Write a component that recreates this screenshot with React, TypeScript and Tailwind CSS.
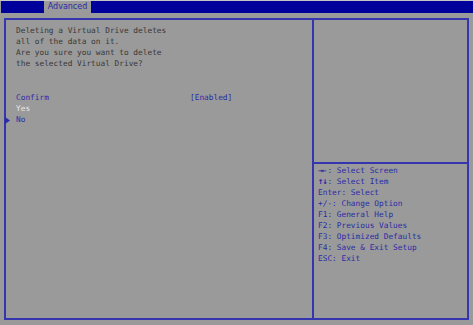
import React from 'react'

const helpLines = [
    'Enter: Select',
    '+/-: Change Option',
    'F1: General Help',
    'F2: Previous Values',
    'F3: Optimized Defaults',
    'F4: Save & Exit Setup',
    'ESC: Exit',
]

const App: React.FC = () => {
    return (
        <div className="relative w-[473px] h-[325px] bg-[#9a9a9a] border-t border-[#c4c4c4] font-['DejaVu_Sans_Mono',monospace] text-[7.8px] leading-[11px] overflow-hidden">
            {/* Top menu bar */}
            <div className="ml-px h-[12px] bg-[#00009a] flex">
                <div className="ml-[43px] w-[47px] h-[12px] bg-[#9a9a9a] text-[#2b2ba6] text-[8px] leading-[12px] text-center font-['DejaVu_Sans',sans-serif]">
                    Advanced
                </div>
            </div>

            {/* Main frame */}
            <div className="mt-[5px] ml-[4px] w-[465px] h-[302px] border-2 border-[#3535b0] flex">
                {/* Left panel */}
                <div className="relative w-[308px] border-r-2 border-[#3535b0] pl-[10px] pt-[5px]">
                    <div className="text-[#383838]">
                        <div>Deleting a Virtual Drive deletes</div>
                        <div>all of the data on it.</div>
                        <div>Are you sure you want to delete</div>
                        <div>the selected Virtual Drive?</div>
                    </div>
                    <div className="mt-[23px] flex text-[#2b2ba6]">
                        <div className="w-[174px]">Confirm</div>
                        <div>[Enabled]</div>
                    </div>
                    <div className="text-[#e8e8e8]">Yes</div>
                    <div className="text-[#2b2ba6]">No</div>
                    <svg className="absolute left-[-1px] top-[97px]" width="5" height="7" viewBox="0 0 5 7">
                        <path d="M0 0 L5 3.5 L0 7 Z" fill="#2b2ba6" />
                    </svg>
                </div>

                {/* Right panel */}
                <div className="flex-1 flex flex-col">
                    <div className="h-[144px] border-b-2 border-[#3535b0]" />
                    <div className="pl-[4px] pt-px text-[#2b2ba6]">
                        <div><span className="inline-block w-[9.4px] font-bold tracking-[-1px]">→←</span>: Select Screen</div>
                        <div><span className="inline-block w-[9.4px] font-bold text-[9px] leading-[11px] tracking-[-1px]">↑↓</span>: Select Item</div>
                        {helpLines.map(line => (
                            <div key={line}>{line}</div>
                        ))}
                    </div>
                </div>
            </div>
        </div>
    )
}

export default App
